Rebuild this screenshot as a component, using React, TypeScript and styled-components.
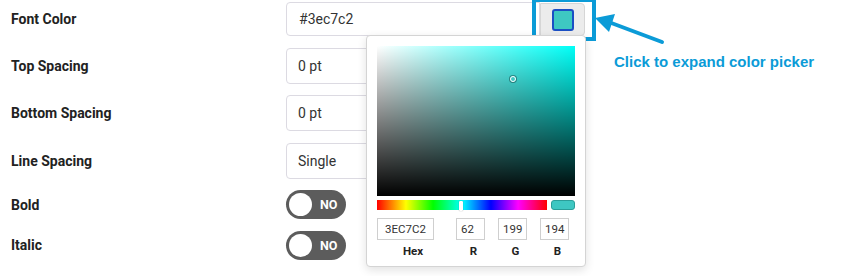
import React from "react";
import styled, { createGlobalStyle } from "styled-components";

const GlobalStyle = createGlobalStyle`
  body {
    margin: 0;
    background: #fff;
    font-family: Roboto, "Liberation Sans", Arial, sans-serif;
  }
`;

const ACCENT = "#0b9bd7";
const HEX = "3ec7c2";
const RGB = { r: 62, g: 199, b: 194 };
const HUE = 178;

const Page = styled.div`
  position: relative;
  width: 843px;
  height: 276px;
  overflow: hidden;
`;

const Form = styled.div`
  display: flex;
  flex-direction: column;
  gap: 11.5px;
  padding-top: 2px;
`;

const Row = styled.div`
  display: grid;
  grid-template-columns: 275px auto;
  align-items: center;
  padding-left: 11px;
`;

const Label = styled.label`
  font-size: 14px;
  font-weight: 700;
  color: #222;
`;

const Field = styled.div`
  box-sizing: border-box;
  width: 255px;
  height: 36px;
  padding: 0 11px;
  display: flex;
  align-items: center;
  border: 1px solid #dcdae2;
  border-radius: 4px;
  font-size: 14px;
  color: #333;
`;

const InputGroup = styled.div`
  position: relative;
  display: flex;
  width: 299px;
`;

const GroupField = styled(Field)`
  height: 34px;
  border-radius: 4px 0 0 4px;
  padding-left: 12px;
`;

const SwatchButton = styled.div`
  box-sizing: border-box;
  width: 45px;
  height: 33px;
  margin-top: 1px;
  display: flex;
  align-items: center;
  justify-content: center;
  background: #ececec;
  border: 1px solid #d6d6d6;
  border-radius: 0 4px 4px 0;
`;

const Swatch = styled.div`
  box-sizing: border-box;
  width: 22px;
  height: 22px;
  border-radius: 3px;
  border: 2px solid #1b4fc4;
  background: #${HEX};
`;

const Highlight = styled.div`
  position: absolute;
  left: 246px;
  top: -4px;
  width: 64px;
  height: 43px;
  box-sizing: border-box;
  border: 4px solid ${ACCENT};
  pointer-events: none;
`;

const Toggle = styled.div`
  box-sizing: border-box;
  width: 60px;
  height: 29px;
  border-radius: 15px;
  background: #5c5c5c;
  display: flex;
  align-items: center;
  padding-left: 3px;
  gap: 8px;
`;

const Knob = styled.div`
  width: 23px;
  height: 23px;
  border-radius: 50%;
  background: #fff;
`;

const ToggleText = styled.span`
  color: #fff;
  font-size: 12.5px;
  font-weight: 700;
`;

/* color picker popover */
const Picker = styled.div`
  position: absolute;
  left: 80px;
  top: 33px;
  width: 220px;
  box-sizing: border-box;
  padding: 10px 10px 8px;
  background: #fff;
  border: 1px solid #d4d4d4;
  border-radius: 4px;
  box-shadow: 0 3px 10px rgba(0, 0, 0, 0.12);
  display: flex;
  flex-direction: column;
  z-index: 2;
`;

const Saturation = styled.div<{ $hue: number }>`
  position: relative;
  flex-shrink: 0;
  height: 150px;
  background: linear-gradient(to top, #000, rgba(0, 0, 0, 0)),
    linear-gradient(to right, #fff, rgba(255, 255, 255, 0)),
    hsl(${(p) => p.$hue}, 100%, 50%);
`;

const Pointer = styled.div`
  position: absolute;
  width: 4px;
  height: 4px;
  margin: -3px 0 0 -3px;
  border: 1.5px solid #fff;
  border-radius: 50%;
  box-shadow: 0 0 0 1px rgba(0, 0, 0, 0.35);
`;

const HueRow = styled.div`
  display: flex;
  flex-shrink: 0;
  gap: 4px;
  margin-top: 4px;
  height: 10px;
`;

const HueBar = styled.div`
  position: relative;
  flex: 1;
  background: linear-gradient(
    to right,
    #f00 0%,
    #ff0 17%,
    #0f0 33%,
    #0ff 50%,
    #00f 67%,
    #f0f 83%,
    #f00 100%
  );
`;

const HueThumb = styled.div`
  position: absolute;
  top: 1px;
  width: 4px;
  height: 10px;
  margin-left: -2px;
  background: #fff;
  border-radius: 1px;
  box-shadow: 0 0 1px rgba(0, 0, 0, 0.5);
`;

const PreviewSwatch = styled.div`
  width: 24px;
  box-sizing: border-box;
  border: 1px solid #2a9e99;
  border-radius: 3px;
  background: #${HEX};
`;

const Inputs = styled.div`
  display: grid;
  grid-template-columns: 72px 35px 35px 35px;
  justify-content: space-between;
  margin-top: 8px;
`;

const Cell = styled.div`
  display: flex;
  flex-direction: column;
  align-items: center;
`;

const SmallInput = styled.div<{ $w: number; $pad: number }>`
  box-sizing: border-box;
  align-self: flex-start;
  width: ${(p) => p.$w}px;
  height: 22px;
  padding-left: ${(p) => p.$pad}px;
  display: flex;
  align-items: center;
  border: 1px solid #cfcfcf;
  font-size: 11.5px;
  color: #333;
  white-space: nowrap;
  overflow: hidden;
`;

const SmallLabel = styled.span`
  margin-top: 4px;
  font-size: 11.5px;
  font-weight: 700;
  color: #222;
`;

/* annotation */
const Callout = styled.div`
  position: absolute;
  left: 590px;
  top: 8px;
`;

const CalloutText = styled.div`
  margin: 3px 0 0 24px;
  font-family: "Liberation Sans", Arial, sans-serif;
  font-size: 15px;
  font-weight: 700;
  color: ${ACCENT};
  white-space: nowrap;
`;

const Arrow = () => (
  <svg width="80" height="38" viewBox="0 0 80 38">
    <line x1="72" y1="34" x2="16" y2="13" stroke={ACCENT} strokeWidth="4" strokeLinecap="round" />
    <polygon points="5,10 25,6 19,24" fill={ACCENT} />
  </svg>
);

const ColorPicker = () => {
  const max = Math.max(RGB.r, RGB.g, RGB.b);
  const min = Math.min(RGB.r, RGB.g, RGB.b);
  const s = max === 0 ? 0 : (max - min) / max;
  const v = max / 255;
  return (
    <Picker>
      <Saturation $hue={HUE}>
        <Pointer style={{ left: `${s * 100}%`, top: `${(1 - v) * 100}%` }} />
      </Saturation>
      <HueRow>
        <HueBar>
          <HueThumb style={{ left: `${(HUE / 360) * 100}%` }} />
        </HueBar>
        <PreviewSwatch />
      </HueRow>
      <Inputs>
        <Cell>
          <SmallInput $w={57} $pad={7}>{HEX.toUpperCase()}</SmallInput>
          <SmallLabel>Hex</SmallLabel>
        </Cell>
        <Cell>
          <SmallInput $w={29} $pad={4}>{RGB.r}</SmallInput>
          <SmallLabel>R</SmallLabel>
        </Cell>
        <Cell>
          <SmallInput $w={29} $pad={4}>{RGB.g}</SmallInput>
          <SmallLabel>G</SmallLabel>
        </Cell>
        <Cell>
          <SmallInput $w={29} $pad={4}>{RGB.b}</SmallInput>
          <SmallLabel>B</SmallLabel>
        </Cell>
      </Inputs>
    </Picker>
  );
};

const Switch = () => (
  <Toggle>
    <Knob />
    <ToggleText>NO</ToggleText>
  </Toggle>
);

export default function App() {
  return (
    <Page>
      <GlobalStyle />
      <Form>
        <Row>
          <Label>Font Color</Label>
          <InputGroup>
            <GroupField>#{HEX}</GroupField>
            <SwatchButton>
              <Swatch />
            </SwatchButton>
            <Highlight />
            <ColorPicker />
          </InputGroup>
        </Row>
        <Row>
          <Label>Top Spacing</Label>
          <Field>0 pt</Field>
        </Row>
        <Row>
          <Label>Bottom Spacing</Label>
          <Field>0 pt</Field>
        </Row>
        <Row>
          <Label>Line Spacing</Label>
          <Field>Single</Field>
        </Row>
        <Row>
          <Label>Bold</Label>
          <Switch />
        </Row>
        <Row>
          <Label>Italic</Label>
          <Switch />
        </Row>
      </Form>
      <Callout>
        <Arrow />
        <CalloutText>Click to expand color picker</CalloutText>
      </Callout>
    </Page>
  );
}
